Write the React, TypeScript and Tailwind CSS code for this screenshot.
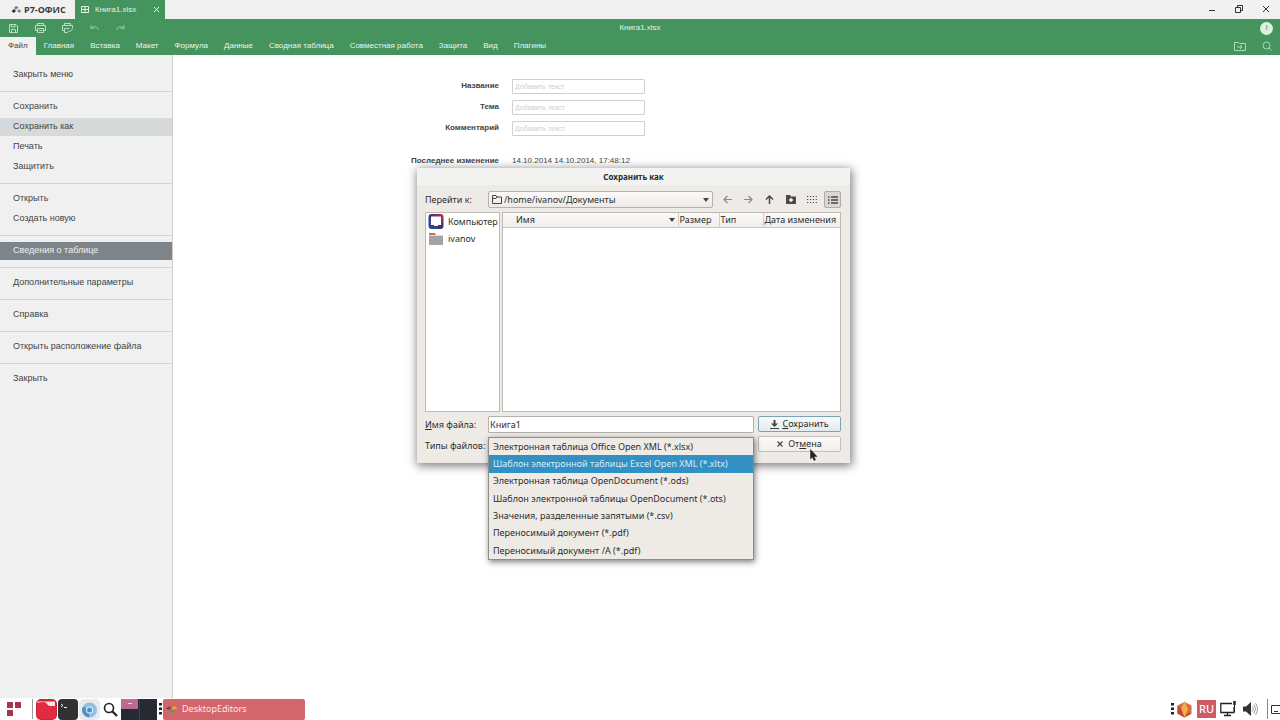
import React, { useState } from "react";
import clsx from "clsx";

const ribbonTabs = [
  "Файл",
  "Главная",
  "Вставка",
  "Макет",
  "Формула",
  "Данные",
  "Сводная таблица",
  "Совместная работа",
  "Защита",
  "Вид",
  "Плагины",
];

const menuGroups = [
  ["Закрыть меню"],
  ["Сохранить", "Сохранить как", "Печать", "Защитить"],
  ["Открыть", "Создать новую"],
  ["Сведения о таблице"],
  ["Дополнительные параметры"],
  ["Справка"],
  ["Открыть расположение файла"],
  ["Закрыть"],
];

const fields = [
  { id: "title", label: "Название" },
  { id: "subject", label: "Тема" },
  { id: "comment", label: "Комментарий" },
];

const fileTypes = [
  "Электронная таблица Office Open XML (*.xlsx)",
  "Шаблон электронной таблицы Excel Open XML (*.xltx)",
  "Электронная таблица OpenDocument (*.ods)",
  "Шаблон электронной таблицы OpenDocument (*.ots)",
  "Значения, разделенные запятыми (*.csv)",
  "Переносимый документ (*.pdf)",
  "Переносимый документ /A (*.pdf)",
];

function TitleBar() {
  return (
    <div className="flex h-[19px] items-stretch bg-[#f1f1f1]">
      <div className="flex w-[75px] items-center gap-[2px] pl-[11px] font-['Open_Sans',sans-serif] text-[9px] font-bold text-[#3a3a3a]">
        <svg width="11" height="10" viewBox="0 0 11 10">
          <path d="M5 1l2.500 1.500L5 4.500 3 3z" fill="#777" />
          <path d="M3 4l2 1.800L3 8 .5 6.200z" fill="#333" />
          <path d="M7.500 4L10.500 6 8.500 8 6 6z" fill="#888" />
        </svg>
        <span>Р7-ОФИС</span>
      </div>
      <div className="flex w-[90px] items-center bg-[#45935d] pr-[5px] pl-[6px] text-[8px] text-[#e3f3e7]">
        <svg width="8" height="7" viewBox="0 0 8 7" fill="none" stroke="currentColor">
          <path d="M.5 .5h7v6h-7zM.5 3.500h7M4 .5v6" />
        </svg>
        <span className="ml-[6px] flex-1">Книга1.xlsx</span>
        <button aria-label="Закрыть вкладку">
          <svg width="7" height="7" viewBox="0 0 7 7" stroke="currentColor">
            <path d="M1 1l5 5M6 1L1 6" />
          </svg>
        </button>
      </div>
      <div className="ml-auto flex items-center pr-px pb-px text-[#333]">
        <button aria-label="Свернуть" className="flex w-[27px] justify-center">
          <svg width="8" height="8" viewBox="0 0 8 8" stroke="currentColor">
            <path d="M1 5.500h6" />
          </svg>
        </button>
        <button aria-label="Восстановить" className="flex w-[27px] justify-center">
          <svg width="8" height="8" viewBox="0 0 8 8" fill="none" stroke="currentColor">
            <path d="M.5 2.500h5v5h-5zM2.500 2.500v-2h5v5h-2" />
          </svg>
        </button>
        <button aria-label="Закрыть" className="flex w-[27px] justify-center">
          <svg width="8" height="8" viewBox="0 0 8 8" stroke="currentColor">
            <path d="M1 1l6 6M7 1L1 7" />
          </svg>
        </button>
      </div>
    </div>
  );
}

function ToolBar() {
  return (
    <div className="relative flex h-[18px] items-center bg-[#45935d] text-[#b9e0c3]">
      <button aria-label="Сохранить" className="flex w-[27px] justify-center">
        <svg width="9" height="9" viewBox="0 0 9 9" fill="none" stroke="currentColor">
          <path d="M.5 .5h6.500l1.500 1.500v6.500h-8zM2.500 .5v2.500h3.500v-2.500M2.500 8.500v-3h4v3" />
        </svg>
      </button>
      <button aria-label="Печать" className="flex w-[27px] justify-center">
        <svg width="11" height="10" viewBox="0 0 11 10" fill="none" stroke="currentColor">
          <path d="M2.500 2.500v-2h6v2M2.500 7.500h-2v-5h10v5h-2M2.500 5.500h6v4h-6zM4 7.500h3" />
        </svg>
      </button>
      <button aria-label="Быстрая печать" className="flex w-[27px] justify-center">
        <svg width="11" height="10" viewBox="0 0 11 10" fill="none" stroke="currentColor">
          <path d="M2.500 2.500v-2h6v2M2.500 7.500h-2v-5h10v3M2.500 5.500h5M2.500 5.500v4h3M6 7.500l1.500 1.500 3-3" />
        </svg>
      </button>
      <button aria-label="Отменить" className="flex w-[26px] justify-center opacity-60">
        <svg width="9" height="6" viewBox="0 0 9 6" fill="none" stroke="currentColor" strokeWidth="1.200">
          <path d="M1 0v3.500h3.500M1.500 3.500C3.500 .8 7 1 8.500 5" />
        </svg>
      </button>
      <button aria-label="Повторить" className="flex w-[27px] justify-center opacity-60">
        <svg width="9" height="6" viewBox="0 0 9 6" fill="none" stroke="currentColor" strokeWidth="1.200">
          <path d="M8 0v3.500H4.500M7.500 3.500C5.500 .8 2 1 .5 5" />
        </svg>
      </button>
      <span className="absolute inset-x-0 text-center text-[8px] text-[#e3f3e7]">Книга1.xlsx</span>
      <span className="relative ml-auto mr-[7px] flex size-[13px] items-center justify-center rounded-full bg-[#dcf2e1] text-[8px] leading-none text-[#45935d]">
        I
      </span>
    </div>
  );
}

function Ribbon() {
  return (
    <nav className="flex h-[18px] bg-[#45935d] text-[8px]">
      {ribbonTabs.map((tab, i) => (
        <button
          key={tab}
          className={clsx("px-2", i === 0 ? "bg-[#f1f1f1] text-[#444]" : "text-[#e9f6ec]")}
        >
          {tab}
        </button>
      ))}
      <div className="ml-auto flex items-center text-[#a9dbb5]">
        <button aria-label="Открыть расположение" className="flex w-[27px] justify-center">
          <svg width="12" height="10" viewBox="0 0 12 10" fill="none" stroke="currentColor">
            <path d="M.5 1.500h4l1 1h6v7H.5zM3 6h5M6 4l2 2-2 2" />
          </svg>
        </button>
        <button aria-label="Поиск" className="flex w-[27px] justify-center">
          <svg width="10" height="10" viewBox="0 0 10 10" fill="none" stroke="currentColor">
            <circle cx="4.500" cy="4.500" r="3.500" />
            <path d="M7 7l2.500 2.500" />
          </svg>
        </button>
      </div>
    </nav>
  );
}

function SideMenu() {
  return (
    <aside className="w-[173px] shrink-0 border-r border-[#cfcfcf] bg-[#f0f0f0] pt-[11px] text-[9px] text-[#444]">
      {menuGroups.map((group, i) => (
        <div key={group[0]} className={clsx("flex flex-col gap-[2px]", i > 0 && "mt-[7px] border-t border-[#d3d3d3] pt-[6px]")}>
          {group.map((item) => (
            <button
              key={item}
              className={clsx(
                "h-[18px] pb-px pl-[13px] text-left",
                item === "Сохранить как" && "bg-[#d7dada]",
                item === "Сведения о таблице" && "bg-[#7d858a] text-[#eef1f2]"
              )}
            >
              {item}
            </button>
          ))}
        </div>
      ))}
    </aside>
  );
}

function DocumentInfo() {
  return (
    <section className="flex flex-col gap-[6px] pt-6 text-[#444]">
      {fields.map((f) => (
        <div key={f.id} className="flex h-[15px] items-center gap-[13px]">
          <label htmlFor={f.id} className="w-[326px] pb-[2px] text-right text-[8px] font-bold">
            {f.label}
          </label>
          <input
            id={f.id}
            placeholder="Добавить текст"
            className="h-[15px] w-[133px] rounded-[1px] border border-[#cfcfcf] px-[2px] text-[7px] placeholder:text-[#cfcfcf]"
          />
        </div>
      ))}
      <div className="mt-[11px] flex h-[15px] items-center gap-[13px] text-[8px]">
        <span className="w-[326px] text-right font-bold">Последнее изменение</span>
        <span>14.10.2014 14.10.2014, 17:48:12</span>
      </div>
    </section>
  );
}

function SaveDialog() {
  const [name, setName] = useState("Книга1");
  const [type, setType] = useState(1);

  return (
    <div
      role="dialog"
      aria-labelledby="dialog-title"
      className="absolute left-[417px] top-[168px] w-[433px] bg-[#eeebe7] pb-[9px] font-['Noto_Sans',sans-serif] text-[9px] text-[#2c2c2c] shadow-[1px_2px_9px_1px_rgba(0,0,0,0.5)]"
    >
      <h2 id="dialog-title" className="h-[17px] bg-[#f3f3f2] text-center text-[8px] leading-[17px] font-bold">
        Сохранить как
      </h2>

      <div className="flex flex-col gap-1 pt-[6px] pr-[9px] pl-2">
        <div className="flex h-[17px] items-center">
          <label htmlFor="folder" className="w-[63px]">
            Перейти к:
          </label>
          <div className="relative h-[17px] w-[225px]">
            <select
              id="folder"
              className="h-[17px] w-full appearance-none rounded-[2px] border border-[#b5b2ae] bg-linear-to-b from-[#fbfaf9] to-[#edeae6] pl-[15px]"
            >
              <option>/home/ivanov/Документы</option>
            </select>
            <svg className="absolute top-[4px] left-[4px]" width="10" height="9" viewBox="0 0 10 9" fill="none" stroke="#444">
              <path d="M.5 8.500v-8h3.500l1 1.500h4.500v6.500zM.5 3.500h3.500l1-1.500" />
            </svg>
            <svg className="absolute top-[7px] right-[4px]" width="6" height="4" viewBox="0 0 6 4" fill="#444">
              <path d="M0 0h6L3 4z" />
            </svg>
          </div>
          <div className="ml-auto flex items-center gap-1 text-[#4a4a4a]">
            <button aria-label="Назад" className="flex size-[17px] items-center justify-center opacity-60">
              <svg width="9" height="9" viewBox="0 0 9 9" fill="none" stroke="currentColor" strokeWidth="1.200">
                <path d="M9 4.500H1M4.500 1L1 4.500 4.500 8" />
              </svg>
            </button>
            <button aria-label="Вперёд" className="flex size-[17px] items-center justify-center opacity-60">
              <svg width="9" height="9" viewBox="0 0 9 9" fill="none" stroke="currentColor" strokeWidth="1.200">
                <path d="M0 4.500h8M4.500 1L8 4.500 4.500 8" />
              </svg>
            </button>
            <button aria-label="Вверх" className="flex size-[17px] items-center justify-center">
              <svg width="9" height="9" viewBox="0 0 9 9" fill="none" stroke="currentColor" strokeWidth="1.500">
                <path d="M4.500 9V1M1 4.500L4.500 1 8 4.500" />
              </svg>
            </button>
            <button aria-label="Создать папку" className="flex size-[17px] items-center justify-center">
              <svg width="10" height="9" viewBox="0 0 10 9">
                <path d="M0 0h4l1 1.500h5V9H0z" fill="currentColor" />
                <path d="M5 3v4M3 5h4" stroke="#fff" strokeWidth="1.300" />
              </svg>
            </button>
            <button aria-label="Значки" className="flex size-[17px] items-center justify-center">
              <svg width="10" height="8" viewBox="0 0 10 8" stroke="currentColor" strokeDasharray="1.200 1.700">
                <path d="M0 .5h10M0 3.500h10M0 6.500h10" />
              </svg>
            </button>
            <button aria-label="Таблица" className="flex size-[17px] items-center justify-center rounded-[2px] border border-[#b0ada9] bg-[#dad7d3]">
              <svg width="10" height="8" viewBox="0 0 10 8" stroke="currentColor" strokeWidth="1.300">
                <path d="M0 1h1.500M3 1h7M0 4h1.500M3 4h7M0 7h1.500M3 7h7" />
              </svg>
            </button>
          </div>
        </div>

        <div className="flex h-[200px] gap-[2px]">
          <ul className="w-[75px] overflow-hidden border border-[#bdbab6] bg-white pl-[2px]">
            <li className="flex h-[17px] items-center gap-[4px]">
              <svg className="shrink-0" width="16" height="15" viewBox="0 0 16 15">
                <defs>
                  <linearGradient id="pc" x1="0" y1="1" x2="1" y2="0">
                    <stop offset="0" stopColor="#2c4f9c" />
                    <stop offset="0.500" stopColor="#3a3478" />
                    <stop offset="1" stopColor="#c0304c" />
                  </linearGradient>
                </defs>
                <rect x=".5" y="0" width="15" height="15" rx="3" fill="url(#pc)" />
                <path d="M3 2.500h10v8.500h-3v1H6v-1H3z" fill="#fff" />
              </svg>
              Компьютер
            </li>
            <li className="flex h-[17px] items-center gap-[4px]">
              <svg className="shrink-0" width="16" height="12" viewBox="0 0 16 12">
                <path d="M1 0h6l1 2h7v3H1z" fill="#d4666c" />
                <path d="M1 2h14v10H1z" fill="#a3a3a3" />
                <path d="M1 2h14v1H1z" fill="#d9d9d9" />
              </svg>
              ivanov
            </li>
          </ul>
          <div className="flex-1 border border-[#bdbab6] bg-white">
            <table className="w-full table-fixed border-collapse">
              <thead className="bg-linear-to-b from-[#fbfaf9] to-[#f0eeeb]">
                <tr className="h-[14px] border-b border-[#c9c6c2] text-left leading-[13px]">
                  <th className="w-[175px] border-r border-[#d2cfcb] pl-[13px] font-normal">
                    <div className="flex items-center justify-between pr-[3px]">
                      Имя
                      <svg width="6" height="4" viewBox="0 0 6 4" fill="#444">
                        <path d="M0 0h6L3 4z" />
                      </svg>
                    </div>
                  </th>
                  <th className="w-[41px] border-r border-[#d2cfcb] pl-px font-normal">Размер</th>
                  <th className="w-[44px] border-r border-[#d2cfcb] pl-px font-normal">Тип</th>
                  <th className="pl-px font-normal whitespace-nowrap">Дата изменения</th>
                </tr>
              </thead>
            </table>
          </div>
        </div>

        <div className="flex justify-between">
          <div className="flex flex-col gap-1">
            <div className="flex h-[17px] items-center">
              <label htmlFor="file-name" className="w-[63px]">
                <u>И</u>мя файла:
              </label>
              <input
                id="file-name"
                value={name}
                onChange={(e) => setName(e.target.value)}
                className="h-[17px] w-[266px] rounded-[1px] border border-[#b5b2ae] bg-white px-px"
              />
            </div>
            <div className="relative flex h-[17px] items-center">
              <label htmlFor="file-type" className="w-[63px] whitespace-nowrap">
                Типы файлов:
              </label>
              <select
                id="file-type"
                value={type}
                onChange={(e) => setType(Number(e.target.value))}
                className="h-[17px] w-[266px] appearance-none border border-[#b5b2ae] px-1"
              >
                {fileTypes.map((t, i) => (
                  <option key={t} value={i}>
                    {t}
                  </option>
                ))}
              </select>
              <ul
                role="listbox"
                aria-label="Типы файлов"
                className="absolute top-0 left-[63px] flex h-[123px] w-[266px] flex-col border border-[#8f8d8a] bg-[#eeebe7] shadow-[1px_2px_6px_rgba(0,0,0,0.5)]"
              >
                {fileTypes.map((t, i) => (
                  <li
                    key={t}
                    role="option"
                    aria-selected={i === type}
                    onClick={() => setType(i)}
                    className={clsx("flex flex-1 items-center pl-1 whitespace-nowrap", i === type && "bg-[#3290c3] text-[#d9eefa]")}
                  >
                    {t}
                  </li>
                ))}
              </ul>
            </div>
          </div>

          <div className="flex w-[83px] flex-col gap-1">
            <button className="flex h-[16px] items-center justify-center gap-[3px] rounded-[2px] border border-[#7ba3b8] bg-linear-to-b from-[#f7fafb] to-[#e3ebee]">
              <svg width="9" height="9" viewBox="0 0 9 9" fill="#444">
                <path d="M3.500 0h2v3.500H8L4.500 7 1 3.500h2.500zM0 8h9v1H0z" />
              </svg>
              <span>
                <u>С</u>охранить
              </span>
            </button>
            <button className="flex h-[16px] items-center justify-center gap-[5px] rounded-[2px] border border-[#c2bfbb] bg-linear-to-b from-[#fbfaf9] to-[#f1efec]">
              <svg width="6" height="6" viewBox="0 0 6 6" stroke="#444" strokeWidth="1.200">
                <path d="M.5 .5l5 5M5.500 .5l-5 5" />
              </svg>
              <span>
                От<u>м</u>ена
              </span>
            </button>
          </div>
        </div>
      </div>

      <svg className="absolute top-[281px] left-[393px]" width="8" height="12" viewBox="0 0 8 12">
        <path d="M.5 .5v9.500l2-2 1.500 3.500 1.500-.7L4 7.500h3z" fill="#222" stroke="#222" strokeWidth=".5" />
      </svg>
    </div>
  );
}

function Taskbar() {
  return (
    <footer className="flex h-[22px] items-center bg-white font-['Noto_Sans',sans-serif]">
      <button aria-label="Меню" className="flex w-[32px] justify-center pr-1">
        <svg width="14" height="14" viewBox="0 0 14 14" fill="#a8364a">
          <path d="M0 0h6v6H0zM8 0h6v6H8zM0 8h6v6H0z" />
        </svg>
      </button>
      <span className="h-[20px] w-px bg-[#999]" />
      <button aria-label="Файлы" className="ml-[3px]">
        <svg width="21" height="21" viewBox="0 0 21 21">
          <rect width="21" height="21" rx="5" fill="#cf2338" />
          <path d="M1.500 2.500h17.500v7H1.500z" fill="#f7e3e4" />
          <path d="M1 4q3-1 7-1 2 0 3 2t3 2h6v9q0 4-4 4H5q-4 0-4-4z" fill="#e02c40" />
        </svg>
      </button>
      <button aria-label="Терминал" className="ml-px">
        <svg width="20" height="21" viewBox="0 0 20 21">
          <rect width="20" height="21" rx="4" fill="#323232" />
          <path d="M3 5l2 1.500L3 8M6 8.500h3" fill="none" stroke="#eee" />
        </svg>
      </button>
      <button aria-label="Браузер" className="ml-px">
        <svg width="21" height="21" viewBox="0 0 21 21">
          <rect width="21" height="21" rx="5" fill="#e8eaed" />
          <circle cx="10.500" cy="11" r="7.500" fill="#8fc0e4" />
          <path d="M10.500 11L4 7.500A7.500 7.500 0 0 0 10 18.500z" fill="#4f8fc4" />
          <circle cx="10.500" cy="11" r="3.500" fill="#e9f3fa" />
          <circle cx="10.500" cy="11" r="2.500" fill="#4a8fc6" />
        </svg>
      </button>
      <button aria-label="Поиск" className="ml-[3px]">
        <svg width="15" height="15" viewBox="0 0 15 15" fill="none" stroke="#222">
          <circle cx="6" cy="6" r="4.500" strokeWidth="1.600" />
          <path d="M9.500 9.500l4.500 4.500" strokeWidth="2.300" />
        </svg>
      </button>
      <div className="ml-[3px] flex h-[21px] w-[36px] bg-[#252a33]">
        <span className="flex h-[10px] w-[17px] items-center justify-center bg-[#b96c92]">
          <span className="h-px w-1 bg-[#f0d5e2]" />
        </span>
        <span className="ml-px w-px bg-[#3c424d]" />
      </div>
      <svg className="ml-[2px]" width="3" height="12" viewBox="0 0 3 12" fill="#222">
        <path d="M0 0h3v2.500H0zM0 4.500h3v2.500H0zM0 9h3v2.500H0z" />
      </svg>
      <button className="ml-px flex h-[21px] w-[142px] items-center gap-[5px] rounded-[2px] bg-[#d3666b] pl-[3px] text-[9px] text-[#fbe9e9]">
        <svg width="11" height="9" viewBox="0 0 11 9">
          <path d="M0 3l4-1.500 1.500 1.500L2 5z" fill="#8c3a44" />
          <path d="M5.500 2.500L9 1l2 2.500L7 5z" fill="#e8a33c" />
          <path d="M2 6l3.500-2L9 6 6 8z" fill="#5f9a55" />
        </svg>
        DesktopEditors
      </button>

      <div className="ml-auto flex items-center">
        <svg width="3" height="12" viewBox="0 0 3 12" fill="#222">
          <path d="M0 0h3v2.500H0zM0 4.500h3v2.500H0zM0 9h3v2.500H0z" />
        </svg>
        <svg className="ml-[3px]" width="15" height="17" viewBox="0 0 15 17">
          <path d="M7.500 1L14.500 4.500v8L7.500 16.500 .5 12.500v-8z" fill="#dc6a34" />
          <path d="M7.500 0L11 8l-3.500 8.500L4 8z" fill="#f0b050" />
          <path d="M.5 4.500L4 8l3.500 8.500-7-4z" fill="#c8403a" />
          <path d="M14.500 12.500l-7 4 4-4.500z" fill="#b8323a" />
        </svg>
        <span className="ml-[5px] flex h-[18px] w-[19px] items-center justify-center bg-[#cf5a62] text-[11px] font-medium text-white">
          RU
        </span>
        <svg className="ml-1" width="16" height="16" viewBox="0 0 16 16" fill="none" stroke="#222">
          <path d="M12 2.500H.8v9H14V6M7.500 11.500v3M4 14.500h7" strokeWidth="1.300" />
          <path d="M14.500 0v4" strokeWidth="2.500" />
          <path d="M14.500 4v7" />
        </svg>
        <svg className="ml-[7px]" width="15" height="14" viewBox="0 0 15 14">
          <path d="M0 4.500h3L8 0v14L3 9.500H0z" fill="#333" />
          <path d="M9.500 4.500q1.500 2.500 0 5M11 2.500q3 4.500 0 9M12.500 1q4 6 0 12" fill="none" stroke="#888" strokeWidth=".8" />
        </svg>
        <span className="ml-[9px] h-[20px] w-px bg-[#888]" />
        <svg className="ml-[3px]" width="9" height="9" viewBox="0 0 9 9" fill="none" stroke="#333">
          <path d="M9 .5H.5v8H9M3 6.500h4" />
        </svg>
      </div>
    </footer>
  );
}

export default function App() {
  return (
    <div className="relative flex h-screen flex-col overflow-hidden bg-white font-['Liberation_Sans',Arial,sans-serif]">
      <TitleBar />
      <ToolBar />
      <Ribbon />
      <div className="flex min-h-0 flex-1">
        <SideMenu />
        <main className="flex-1">
          <DocumentInfo />
        </main>
      </div>
      <Taskbar />
      <SaveDialog />
    </div>
  );
}
